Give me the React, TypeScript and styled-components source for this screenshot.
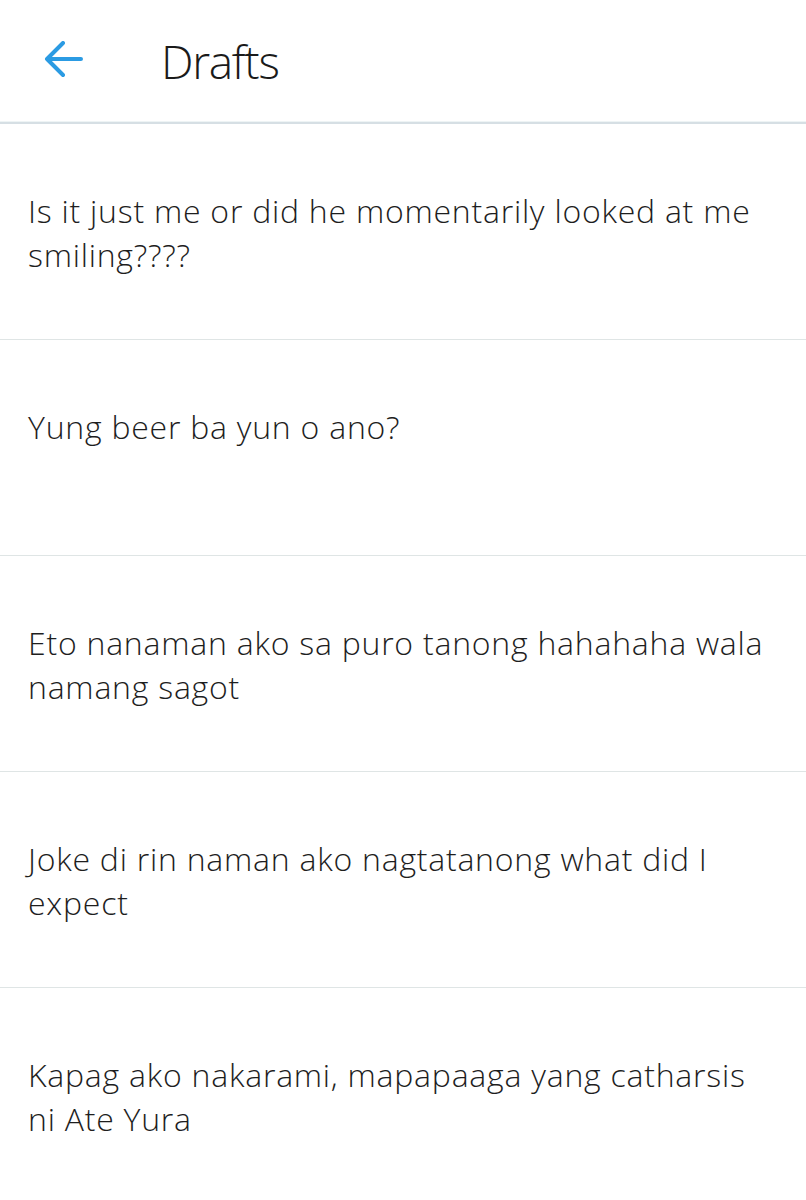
import React from 'react';
import styled, { createGlobalStyle } from 'styled-components';

const GlobalStyle = createGlobalStyle`
  body {
    margin: 0;
    background: #ffffff;
    font-family: 'Open Sans', 'Noto Sans', sans-serif;
  }
`;

const Page = styled.div`
  width: 806px;
  min-height: 1200px;
  background: #ffffff;
  overflow: hidden;
`;

const Header = styled.header`
  display: flex;
  align-items: center;
  height: 121px;
  border-bottom: 1px solid #eef4f5;
  box-shadow: 0 2px 0 #d6dfe4;
  margin-bottom: 2px;
`;

const BackButton = styled.button`
  display: flex;
  align-items: center;
  justify-content: center;
  width: 40px;
  height: 40px;
  margin-left: 43px;
  padding: 0;
  border: none;
  background: none;
  cursor: pointer;
`;

const Title = styled.h1`
  margin: 0 0 0 78px;
  font-size: 46px;
  font-weight: 300;
  color: #1a1a1a;
  letter-spacing: -1.3px;
`;

const DraftList = styled.ul`
  list-style: none;
  margin: 0;
  padding: 0;
`;

const DraftRow = styled.li`
  box-sizing: border-box;
  height: 216px;
  padding: 65px 28px 0 28px;
  border-bottom: 1px solid #dfe5e5;
`;

const DraftText = styled.p`
  margin: 0;
  font-size: 32px;
  line-height: 44px;
  font-weight: 300;
  color: #1e1e1e;
  letter-spacing: 0.76px;
`;

const drafts = [
  'Is it just me or did he momentarily looked at me smiling????',
  'Yung beer ba yun o ano?',
  'Eto nanaman ako sa puro tanong hahahaha wala namang sagot',
  'Joke di rin naman ako nagtatanong what did I expect',
  'Kapag ako nakarami, mapapaaga yang catharsis ni Ate Yura',
];

const BackArrow = () => (
  <svg width="40" height="40" viewBox="0 0 40 40" fill="none">
    <path
      d="M38 18H4M20 2L4 18L20 34"
      stroke="#2b9be3"
      strokeWidth="4"
      strokeLinecap="round"
      strokeLinejoin="round"
    />
  </svg>
);

const App = () => {
  return (
    <Page>
      <GlobalStyle />
      <Header>
        <BackButton aria-label="Back">
          <BackArrow />
        </BackButton>
        <Title>Drafts</Title>
      </Header>
      <DraftList>
        {drafts.map((d) => (
          <DraftRow key={d}>
            <DraftText>{d}</DraftText>
          </DraftRow>
        ))}
      </DraftList>
    </Page>
  );
};

export default App;
